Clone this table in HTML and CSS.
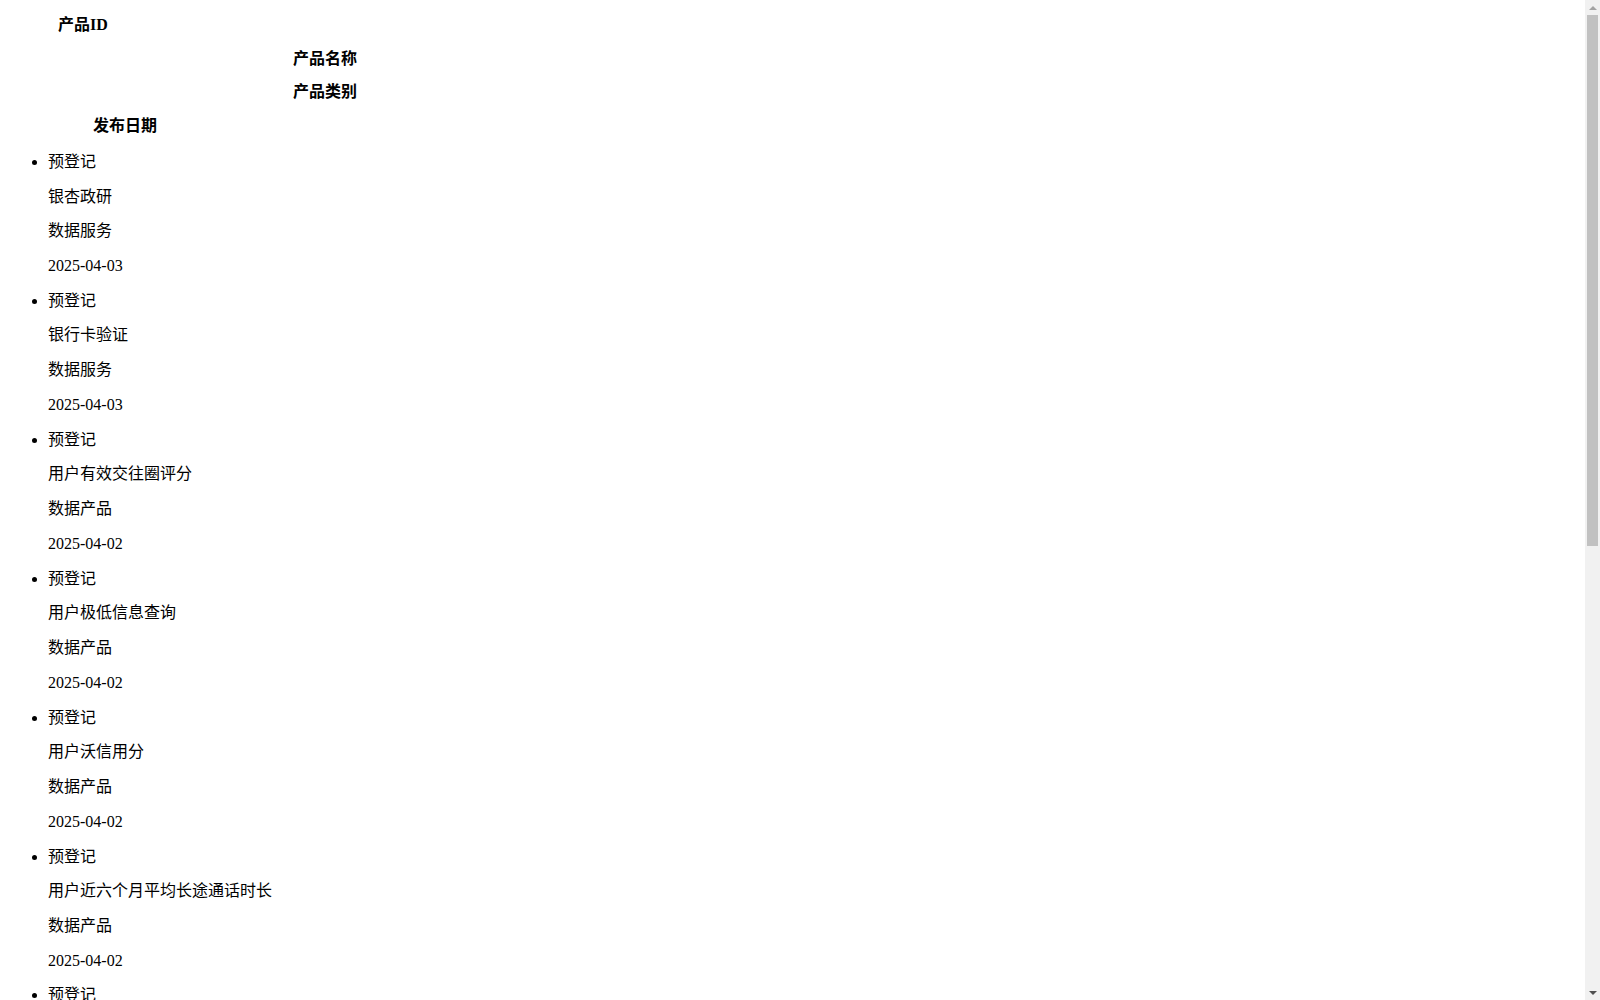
FILE: index.html
```html
<!DOCTYPE html>
<html lang="zh-CN">
<head>
<meta charset="utf-8">
<title>产品列表</title>
<link rel="stylesheet" href="styles.css">
</head>
<body>
<div class="list-head">
  <p class="head-cell head-id">产品ID</p>
  <p class="head-cell head-name">产品名称</p>
  <p class="head-cell head-name">产品类别</p>
  <p class="head-cell head-date">发布日期</p>
</div>
<ul class="product-list">
  <li class="product"><p class="cell">预登记</p><p class="cell">银杏政研</p><p class="cell">数据服务</p><p class="cell">2025-04-03</p></li>
  <li class="product"><p class="cell">预登记</p><p class="cell">银行卡验证</p><p class="cell">数据服务</p><p class="cell">2025-04-03</p></li>
  <li class="product"><p class="cell">预登记</p><p class="cell">用户有效交往圈评分</p><p class="cell">数据产品</p><p class="cell">2025-04-02</p></li>
  <li class="product"><p class="cell">预登记</p><p class="cell">用户极低信息查询</p><p class="cell">数据产品</p><p class="cell">2025-04-02</p></li>
  <li class="product"><p class="cell">预登记</p><p class="cell">用户沃信用分</p><p class="cell">数据产品</p><p class="cell">2025-04-02</p></li>
  <li class="product"><p class="cell">预登记</p><p class="cell">用户近六个月平均长途通话时长</p><p class="cell">数据产品</p><p class="cell">2025-04-02</p></li>
  <li class="product"><p class="cell">预登记</p><p class="cell">用户近三个月平均通话次数</p><p class="cell">数据产品</p><p class="cell">2025-04-02</p></li>
  <li class="product"><p class="cell">预登记</p><p class="cell">用户在网时长查询</p><p class="cell">数据产品</p><p class="cell">2025-04-02</p></li>
  <li class="product"><p class="cell">预登记</p><p class="cell">企业信用画像</p><p class="cell">数据服务</p><p class="cell">2025-04-01</p></li>
  <li class="product"><p class="cell">预登记</p><p class="cell">手机号三要素核验</p><p class="cell">数据服务</p><p class="cell">2025-04-01</p></li>
  <li class="product"><p class="cell">预登记</p><p class="cell">区域消费指数</p><p class="cell">数据产品</p><p class="cell">2025-04-01</p></li>
  <li class="product"><p class="cell">预登记</p><p class="cell">物流轨迹查询</p><p class="cell">数据服务</p><p class="cell">2025-04-01</p></li>
</ul>
<div class="fake-scrollbar" aria-hidden="true">
  <div class="sb-btn sb-up"><span class="sb-arrow-up"></span></div>
  <div class="sb-thumb"></div>
  <div class="sb-btn sb-down"><span class="sb-arrow-down"></span></div>
</div>
</body>
</html>
```

FILE: styles.css
```css
body {
  margin: 8px;
  font-family: "Liberation Serif", "Noto Sans CJK SC", serif;
  font-size: 16px;
  color: #000;
  background: #fff;
}

.list-head {
  margin: 0;
  padding-top: 8px;
}

.head-cell {
  margin: 16px 0;
  line-height: 17.7px;
  font-weight: bold;
}

.head-cell:first-child {
  margin-top: 0;
}

.head-id {
  padding-left: 50px;
}

.head-name {
  padding-left: 285px;
}

.head-date {
  padding-left: 85px;
}

.product-list {
  margin: 18px 0 16px;
  padding-left: 40px;
  list-style: disc;
}

.product {
  margin: 0;
}

.cell {
  margin: 16px 0;
  line-height: 18.74px;
}

.product:first-child .cell:first-child {
  margin-top: 18px;
}

/* decorative classic scrollbar drawn over the right edge */
.fake-scrollbar {
  position: fixed;
  top: 0;
  right: 0;
  width: 15px;
  height: 100vh;
  background: #f1f1f1;
  display: flex;
  flex-direction: column;
}

.sb-btn {
  height: 15px;
  display: flex;
  align-items: center;
  justify-content: center;
  flex: none;
}

.sb-arrow-up {
  width: 0;
  height: 0;
  border-left: 4px solid transparent;
  border-right: 4px solid transparent;
  border-bottom: 4px solid #a3a3a3;
}

.sb-arrow-down {
  width: 0;
  height: 0;
  border-left: 4px solid transparent;
  border-right: 4px solid transparent;
  border-top: 4px solid #505050;
}

.sb-thumb {
  height: 531px;
  margin: 0 2px;
  background: #c1c1c1;
  flex: none;
}

.sb-down {
  margin-top: auto;
}
```
